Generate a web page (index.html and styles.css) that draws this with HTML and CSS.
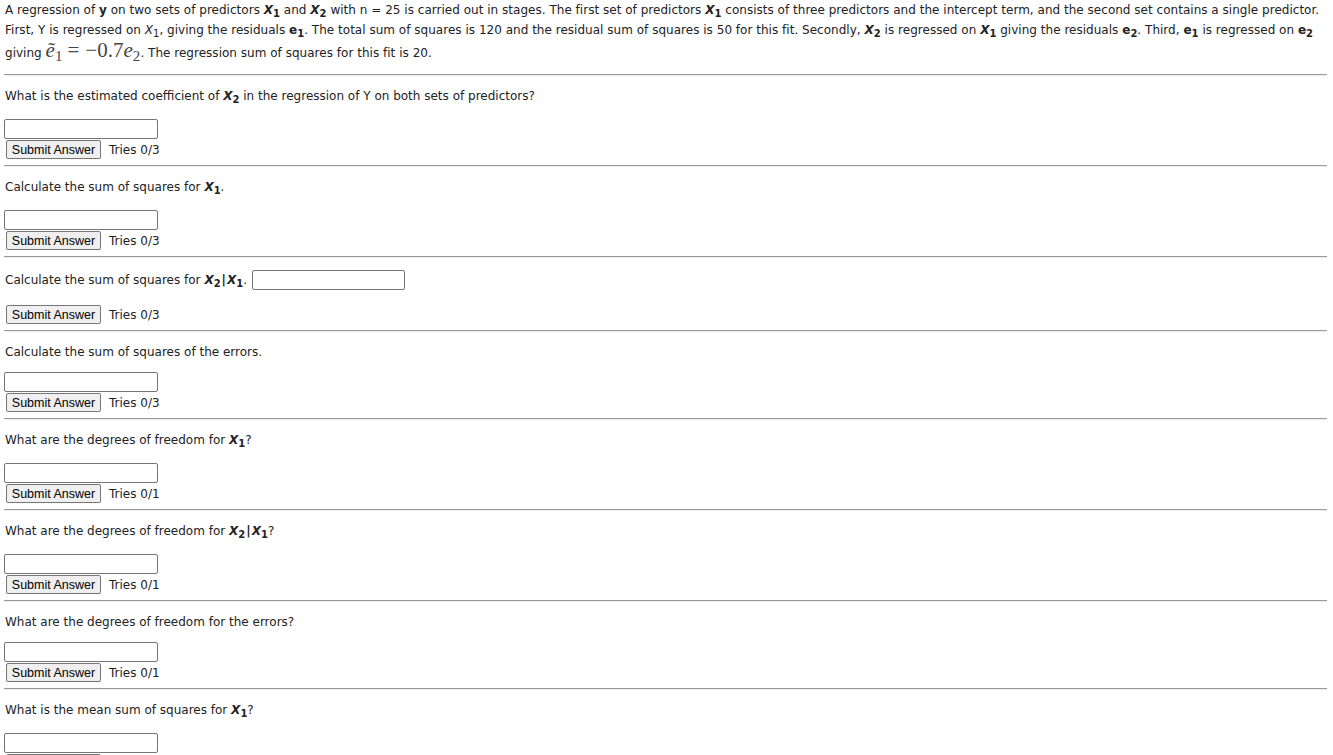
FILE: index.html
```html
<!DOCTYPE html>
<html>
<head>
<meta charset="utf-8">
<link rel="stylesheet" href="styles.css">
</head>
<body>
<div class="page">
  <p class="intro">A regression of <b>y</b> on two sets of predictors <span class="mv">X<sub>1</sub></span> and <span class="mv">X<sub>2</sub></span> with n = 25 is carried out in stages. The first set of predictors <span class="mv">X<sub>1</sub></span> consists of three predictors and the intercept term, and the second set contains a single predictor.<br>First, Y is regressed on <span class="mi">X<sub>1</sub></span>, giving the residuals <span class="mb">e<sub>1</sub></span>. The total sum of squares is 120 and the residual sum of squares is 50 for this fit. Secondly, <span class="mv">X<sub>2</sub></span> is regressed on <span class="mv">X<sub>1</sub></span> giving the residuals <span class="mb">e<sub>2</sub></span>. Third, <span class="mb">e<sub>1</sub></span> is regressed on <span class="mb">e<sub>2</sub></span><br>giving <span class="tex"><span class="tex-i">e&#771;</span><sub>1</sub><span class="tex-op">=</span>&minus;0.7<span class="tex-i">e</span><sub>2</sub></span>. The regression sum of squares for this fit is 20.</p>

  <hr class="rule rule-first">
  <div class="q">
    <p class="q-text">What is the estimated coefficient of <span class="mv">X<sub>2</sub></span> in the regression of Y on both sets of predictors?</p>
    <input class="answer" type="text">
    <div class="actions"><button class="submit">Submit Answer</button><span class="tries">Tries 0/3</span></div>
  </div>

  <hr class="rule">
  <div class="q">
    <p class="q-text">Calculate the sum of squares for <span class="mv">X<sub>1</sub></span>.</p>
    <input class="answer" type="text">
    <div class="actions"><button class="submit">Submit Answer</button><span class="tries">Tries 0/3</span></div>
  </div>

  <hr class="rule">
  <div class="q">
    <p class="q-text q-inline">Calculate the sum of squares for <span class="mv">X<sub>2</sub></span><span class="bar">|</span><span class="mv">X<sub>1</sub></span>. <input class="answer answer-inline" type="text"></p>
    <div class="actions"><button class="submit">Submit Answer</button><span class="tries">Tries 0/3</span></div>
  </div>

  <hr class="rule">
  <div class="q">
    <p class="q-text q-plain">Calculate the sum of squares of the errors.</p>
    <input class="answer" type="text">
    <div class="actions"><button class="submit">Submit Answer</button><span class="tries">Tries 0/3</span></div>
  </div>

  <hr class="rule">
  <div class="q">
    <p class="q-text">What are the degrees of freedom for <span class="mv">X<sub>1</sub></span>?</p>
    <input class="answer" type="text">
    <div class="actions"><button class="submit">Submit Answer</button><span class="tries">Tries 0/1</span></div>
  </div>

  <hr class="rule">
  <div class="q">
    <p class="q-text">What are the degrees of freedom for <span class="mv">X<sub>2</sub></span><span class="bar">|</span><span class="mv">X<sub>1</sub></span>?</p>
    <input class="answer" type="text">
    <div class="actions"><button class="submit">Submit Answer</button><span class="tries">Tries 0/1</span></div>
  </div>

  <hr class="rule">
  <div class="q">
    <p class="q-text q-plain">What are the degrees of freedom for the errors?</p>
    <input class="answer" type="text">
    <div class="actions"><button class="submit">Submit Answer</button><span class="tries">Tries 0/1</span></div>
  </div>

  <hr class="rule">
  <div class="q">
    <p class="q-text">What is the mean sum of squares for <span class="mv">X<sub>1</sub></span>?</p>
    <input class="answer" type="text">
    <div class="actions"><button class="submit">Submit Answer</button><span class="tries">Tries 0/1</span></div>
  </div>
</div>
</body>
</html>
```

FILE: styles.css
```css
html, body {
  margin: 0;
  padding: 0;
  background: #ffffff;
}

body {
  font-family: "DejaVu Sans", Verdana, sans-serif;
  font-size: 12px;
  color: #222222;
}

.page {
  padding: 0 6px 0 4px;
}

p {
  margin: 0;
}

.intro {
  line-height: 20px;
  padding-left: 1px;
  white-space: nowrap;
  letter-spacing: 0.02px;
}

.mv {
  font-weight: bold;
  font-style: italic;
}

.mi {
  font-style: italic;
}

.mb {
  font-weight: bold;
}

sub {
  font-size: 10px;
  vertical-align: -3px;
  line-height: 0;
  font-style: normal;
}

.tex {
  font-family: "Liberation Serif", "Times New Roman", serif;
  font-size: 21px;
  color: #444444;
}

.tex-i {
  font-style: italic;
}

.tex-op {
  margin: 0 6px 0 5px;
}

.tex sub {
  font-size: 15px;
  vertical-align: -4px;
}

.bar {
  font-weight: bold;
  padding: 0 1px;
}

.rule {
  border: none;
  border-top: 1px solid #9a9a9a;
  border-bottom: 1px solid #eeeeee;
  margin: 0;
}

.rule-first {
  margin-top: 11px;
}

.q {
  padding: 10px 0 6px;
}

.q-text {
  line-height: 20px;
  padding-left: 1px;
  padding-bottom: 13px;
}

.q-plain {
  padding-bottom: 10px;
}

.q-inline {
  display: flex;
  align-items: center;
  white-space: pre;
  padding-top: 2px;
  padding-bottom: 14px;
}

.answer {
  display: block;
  box-sizing: border-box;
  width: 154px;
  height: 20px;
  margin: 0;
  border: 1px solid #767676;
  border-radius: 2px;
  padding: 1px 2px;
  font: inherit;
  background: #ffffff;
}

.answer-inline {
  display: inline-block;
  width: 153px;
  margin-left: 1px;
}

.actions {
  display: flex;
  align-items: center;
  margin-top: 1px;
  padding-left: 2px;
}

.submit {
  box-sizing: border-box;
  height: 19px;
  width: 95px;
  margin: 0;
  padding: 0 4px;
  white-space: nowrap;
  font-family: "Liberation Sans", Arial, sans-serif;
  font-size: 12.5px;
  color: #000000;
  background: #efefef;
  border: 1px solid #767676;
  border-radius: 2px;
}

.tries {
  margin-left: 8px;
}
```
